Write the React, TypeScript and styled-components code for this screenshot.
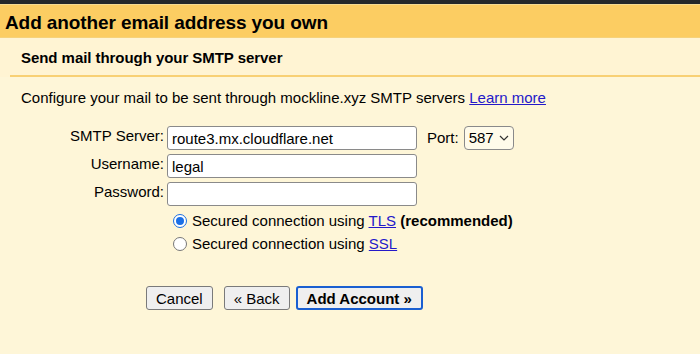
import React from "react";
import styled, { createGlobalStyle } from "styled-components";

const Global = createGlobalStyle`
  html, body { margin: 0; padding: 0; }
  body {
    background: #fef6d8;
    font-family: "Liberation Sans", Arial, sans-serif;
    color: #000;
    width: 700px;
    height: 354px;
    overflow: hidden;
  }
`;

const Page = styled.div`
  display: flex;
  flex-direction: column;
  width: 700px;
  height: 354px;
  background: #fef6d8;
`;

const TopBar = styled.div`
  height: 4px;
  background: #25282a;
  border-bottom: 1px solid #f7dc92;
`;

const Header = styled.h1`
  margin: 0;
  height: 33px;
  box-sizing: border-box;
  padding: 6px 0 0 5px;
  background: #fccd62;
  border-bottom: 1px solid #f6d27a;
  font-size: 19px;
  font-weight: bold;
  line-height: 24px;
  letter-spacing: -0.1px;
`;

const SubBand = styled.div`
  background: #fff4d3;
  padding-left: 10px;
`;

const SubTitle = styled.h2`
  margin: 0;
  height: 39px;
  box-sizing: border-box;
  padding: 11px 0 0 11px;
  font-size: 15px;
  font-weight: bold;
  line-height: 18px;
  letter-spacing: -0.05px;
  border-bottom: 2px solid #f8d074;
`;

const Body = styled.div`
  padding: 12px 0 0 21px;
  font-size: 15px;
  line-height: 18px;
`;

const Intro = styled.p`
  margin: 0 0 19px;
`;

const Link = styled.a`
  color: #2419c9;
  text-decoration: underline;
`;

const Form = styled.div`
  display: grid;
  grid-template-columns: 143px 250px auto;
  column-gap: 3px;
  row-gap: 4px;
  align-items: center;
`;

const Label = styled.label`
  text-align: right;
  align-self: start;
  padding-top: 1px;
`;

const TextInput = styled.input`
  box-sizing: border-box;
  width: 250px;
  height: 24px;
  margin: 0;
  padding: 1px 4px 0;
  border: 1px solid #8a8a8a;
  border-radius: 3px;
  background: #fff;
  font-family: "Liberation Sans", Arial, sans-serif;
  font-size: 15px;
  color: #000;
  outline: none;
`;

const PortBox = styled.div`
  display: flex;
  align-items: center;
  gap: 5px;
  padding-left: 7px;
`;

const Select = styled.div`
  box-sizing: border-box;
  display: flex;
  align-items: center;
  gap: 5px;
  height: 24px;
  padding: 0 4px 0 4px;
  border: 1px solid #8a8a8a;
  border-radius: 4px;
  background: #fffbea;
  font-size: 15px;
`;

const Radios = styled.div`
  display: flex;
  flex-direction: column;
  gap: 5px;
  margin: 6px 0 0 152px;
`;

const RadioRow = styled.label`
  display: flex;
  align-items: center;
  gap: 5px;
`;

const Radio = styled.span<{ $checked?: boolean }>`
  box-sizing: border-box;
  width: 14px;
  height: 14px;
  border-radius: 50%;
  border: 1px solid ${(p) => (p.$checked ? "#1a6fe6" : "#777")};
  background: ${(p) => (p.$checked ? "#1a6fe6" : "#fff")};
  box-shadow: ${(p) => (p.$checked ? "inset 0 0 0 2px #fff" : "none")};
  ${(p) => (p.$checked ? "background-clip: content-box; padding: 1px;" : "")}
`;

const Buttons = styled.div`
  display: flex;
  gap: 6px;
  margin: 33px 0 0 125px;
`;

const Button = styled.button<{ $primary?: boolean; $gap?: number }>`
  box-sizing: border-box;
  height: 24px;
  margin: 0 0 0 ${(p) => p.$gap ?? 0}px;
  padding: 0 9px;
  border: ${(p) => (p.$primary ? "2px solid #1a5fd1" : "1px solid #7a7a7a")};
  border-radius: 3px;
  background: #efefef;
  font-family: "Liberation Sans", Arial, sans-serif;
  font-size: 15px;
  font-weight: ${(p) => (p.$primary ? "bold" : "normal")};
  color: #000;
`;

export default function App() {
  return (
    <Page>
      <Global />
      <TopBar />
      <Header>Add another email address you own</Header>
      <SubBand>
        <SubTitle>Send mail through your SMTP server</SubTitle>
      </SubBand>
      <Body>
        <Intro>
          Configure your mail to be sent through mockline.xyz SMTP servers{" "}
          <Link href="#">Learn more</Link>
        </Intro>
        <Form>
          <Label>SMTP Server:</Label>
          <TextInput defaultValue="route3.mx.cloudflare.net" />
          <PortBox>
            Port:
            <Select>
              587
              <svg width="10" height="6" viewBox="0 0 10 6">
                <path d="M1 1l4 4 4-4" fill="none" stroke="#333" strokeWidth="1.2" />
              </svg>
            </Select>
          </PortBox>
          <Label>Username:</Label>
          <TextInput defaultValue="legal" />
          <span />
          <Label>Password:</Label>
          <TextInput type="password" />
          <span />
        </Form>
        <Radios>
          <RadioRow>
            <Radio $checked />
            <span>
              Secured connection using <Link href="#">TLS</Link>{" "}
              <b>(recommended)</b>
            </span>
          </RadioRow>
          <RadioRow>
            <Radio />
            <span>
              Secured connection using <Link href="#">SSL</Link>
            </span>
          </RadioRow>
        </Radios>
        <Buttons>
          <Button>Cancel</Button>
          <Button $gap={5}>« Back</Button>
          <Button $primary>Add Account »</Button>
        </Buttons>
      </Body>
    </Page>
  );
}
